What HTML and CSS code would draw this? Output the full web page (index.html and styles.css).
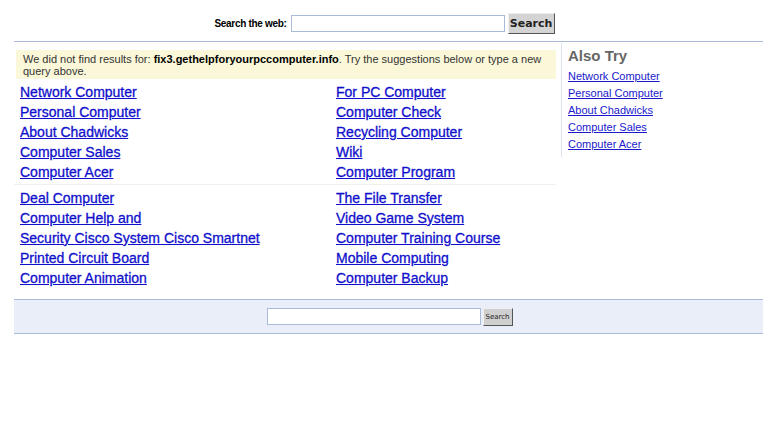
FILE: index.html
```html
<!DOCTYPE html>
<html>
<head>
	<title>fix3.gethelpforyourpccomputer.info</title>
	<meta http-equiv="Content-Type" content="text/html; charset=UTF-8">
	<link rel="stylesheet" href="styles.css">
</head>
<body>
	<div id="top-search">
		<label for="q1">Search the web:</label>
		<input type="text" id="q1" class="q-top">
		<input type="button" value="Search" class="btn-top">
	</div>
	<div id="main">
		<div id="results">
			<div id="notice">We did not find results for: <b>fix3.gethelpforyourpccomputer.info</b>. Try the suggestions below or type a new query above.</div>
			<div class="link-block">
				<div class="link-col">
					<a href="#">Network Computer</a>
					<a href="#">Personal Computer</a>
					<a href="#">About Chadwicks</a>
					<a href="#">Computer Sales</a>
					<a href="#">Computer Acer</a>
				</div>
				<div class="link-col">
					<a href="#">For PC Computer</a>
					<a href="#">Computer Check</a>
					<a href="#">Recycling Computer</a>
					<a href="#">Wiki</a>
					<a href="#">Computer Program</a>
				</div>
			</div>
			<div class="link-block second">
				<div class="link-col">
					<a href="#">Deal Computer</a>
					<a href="#">Computer Help and</a>
					<a href="#">Security Cisco System Cisco Smartnet</a>
					<a href="#">Printed Circuit Board</a>
					<a href="#">Computer Animation</a>
				</div>
				<div class="link-col">
					<a href="#">The File Transfer</a>
					<a href="#">Video Game System</a>
					<a href="#">Computer Training Course</a>
					<a href="#">Mobile Computing</a>
					<a href="#">Computer Backup</a>
				</div>
			</div>
		</div>
		<div id="also-try">
			<h3>Also Try</h3>
			<a href="#">Network Computer</a>
			<a href="#">Personal Computer</a>
			<a href="#">About Chadwicks</a>
			<a href="#">Computer Sales</a>
			<a href="#">Computer Acer</a>
		</div>
	</div>
	<div id="bottom-search">
		<input type="text" class="q-bottom">
		<input type="button" value="Search" class="btn-bottom">
	</div>
</body>
</html>
```

FILE: styles.css
```css
body {
	margin: 0;
	padding: 0 14px;
	font-family: "Liberation Sans", Arial, sans-serif;
	background: #FFFFFF;
}
#top-search {
	height: 42px;
	display: flex;
	justify-content: center;
	align-items: center;
	padding-top: 6px;
	padding-right: 8px;
	border-bottom: 1px solid #a9bbd9;
	box-sizing: border-box;
}
#top-search label {
	font-size: 10px;
	font-weight: bold;
	letter-spacing: -0.3px;
	color: #000;
	margin-right: 4px;
}
.q-top {
	width: 214px;
	height: 17px;
	box-sizing: border-box;
	border: 1px solid #a9bbd9;
	margin: 0 3px 0 0;
	padding: 0;
}
.btn-top {
	width: 47px;
	height: 21px;
	font-family: "DejaVu Sans", sans-serif;
	font-size: 11px;
	font-weight: bold;
	color: #222;
	background: #d4d4d4;
	border: 1px solid;
	border-color: #eee #555 #555 #eee;
	padding: 0;
	margin-left: 0;
}
#main {
	display: flex;
	height: 257px;
}
#results {
	width: 542px;
	padding-top: 8px;
	padding-right: 5px;
}
#notice {
	background: #fbf8d9;
	font-size: 11px;
	line-height: 12px;
	color: #333;
	padding: 3px 4px 2px 7px;
	margin-left: 2px;
}
#notice b {
	color: #000;
}
.link-block {
	display: flex;
	padding: 3px 0 2px 6px;
}
.link-block.second {
	border-top: 1px solid #f0f0f0;
}
.link-col {
	display: flex;
	flex-direction: column;
	width: 316px;
}
.link-col:last-child {
	width: auto;
}
.link-col a {
	font-size: 14px;
	line-height: 20px;
	color: #0f0fcc;
	-webkit-text-stroke: 0.3px #0f0fcc;
	align-self: flex-start;
}
#also-try {
	align-self: flex-start;
	margin-top: 1px;
	padding: 4px 0 4px 6px;
	border-left: 1px solid #dde3ee;
	display: flex;
	flex-direction: column;
	align-items: flex-start;
}
#also-try h3 {
	margin: 0 0 3px 0;
	font-size: 15px;
	line-height: 18px;
	color: #666;
}
#also-try a {
	font-size: 11px;
	line-height: 17px;
	color: #1a1acc;
}
#bottom-search {
	height: 33px;
	background: #e9eef8;
	border-top: 1px solid #a9bbd9;
	border-bottom: 1px solid #a9bbd9;
	display: flex;
	justify-content: center;
	align-items: center;
	padding-left: 2px;
}
.q-bottom {
	width: 214px;
	height: 17px;
	box-sizing: border-box;
	border: 1px solid #a9bbd9;
	margin: 0 2px 0 0;
	padding: 0;
}
.btn-bottom {
	width: 30px;
	height: 18px;
	font-family: "DejaVu Sans", sans-serif;
	font-size: 7px;
	color: #222;
	background: #d0d0d0;
	border: 1px solid;
	border-color: #eee #555 #555 #eee;
	padding: 0;
}
```
